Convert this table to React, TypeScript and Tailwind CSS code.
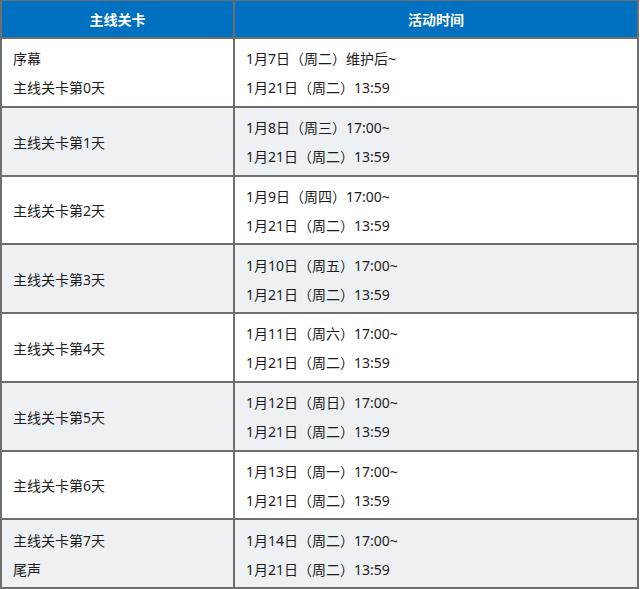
import React from "react";

const rows: { left: string[]; right: string[] }[] = [
  { left: ["序幕", "主线关卡第0天"], right: ["1月7日（周二）维护后~", "1月21日（周二）13:59"] },
  { left: ["主线关卡第1天"], right: ["1月8日（周三）17:00~", "1月21日（周二）13:59"] },
  { left: ["主线关卡第2天"], right: ["1月9日（周四）17:00~", "1月21日（周二）13:59"] },
  { left: ["主线关卡第3天"], right: ["1月10日（周五）17:00~", "1月21日（周二）13:59"] },
  { left: ["主线关卡第4天"], right: ["1月11日（周六）17:00~", "1月21日（周二）13:59"] },
  { left: ["主线关卡第5天"], right: ["1月12日（周日）17:00~", "1月21日（周二）13:59"] },
  { left: ["主线关卡第6天"], right: ["1月13日（周一）17:00~", "1月21日（周二）13:59"] },
  { left: ["主线关卡第7天", "尾声"], right: ["1月14日（周二）17:00~", "1月21日（周二）13:59"] },
];

export default function App() {
  return (
    <div
      className="w-[640px] h-[589px] bg-white text-[14px] text-[#1c1c1c]"
      style={{ fontFamily: '"Noto Sans", "Noto Sans CJK SC", sans-serif' }}
    >
      <div className="w-[639px] h-[589px] flex flex-col border-t border-l-2 border-r-2 border-b-2 border-[#6e6e6e]">
        <div className="h-[38px] shrink-0 flex bg-[#0070c0] text-white font-bold border-b-2 border-[#6e6e6e]">
          <div className="w-[233px] shrink-0 flex items-center justify-center border-r-2 border-[#6e6e6e]">主线关卡</div>
          <div className="flex-1 flex items-center justify-center">活动时间</div>
        </div>
        {rows.map((r, i) => (
          <div
            key={i}
            className={`flex-1 flex ${i < rows.length - 1 ? "border-b-2 border-[#6e6e6e]" : ""} ${i % 2 === 1 ? "bg-[#edf1f4]" : "bg-white"}`}
          >
            <div className="w-[233px] shrink-0 flex flex-col justify-center pl-[11px] pt-[2px] leading-[29px] border-r-2 border-[#6e6e6e]">
              {r.left.map((t, j) => (
                <div key={j}>{t}</div>
              ))}
            </div>
            <div className="flex-1 flex flex-col justify-center pl-[11px] pt-[2px] leading-[29px]">
              {r.right.map((t, j) => (
                <div key={j}>{t}</div>
              ))}
            </div>
          </div>
        ))}
      </div>
    </div>
  );
}
